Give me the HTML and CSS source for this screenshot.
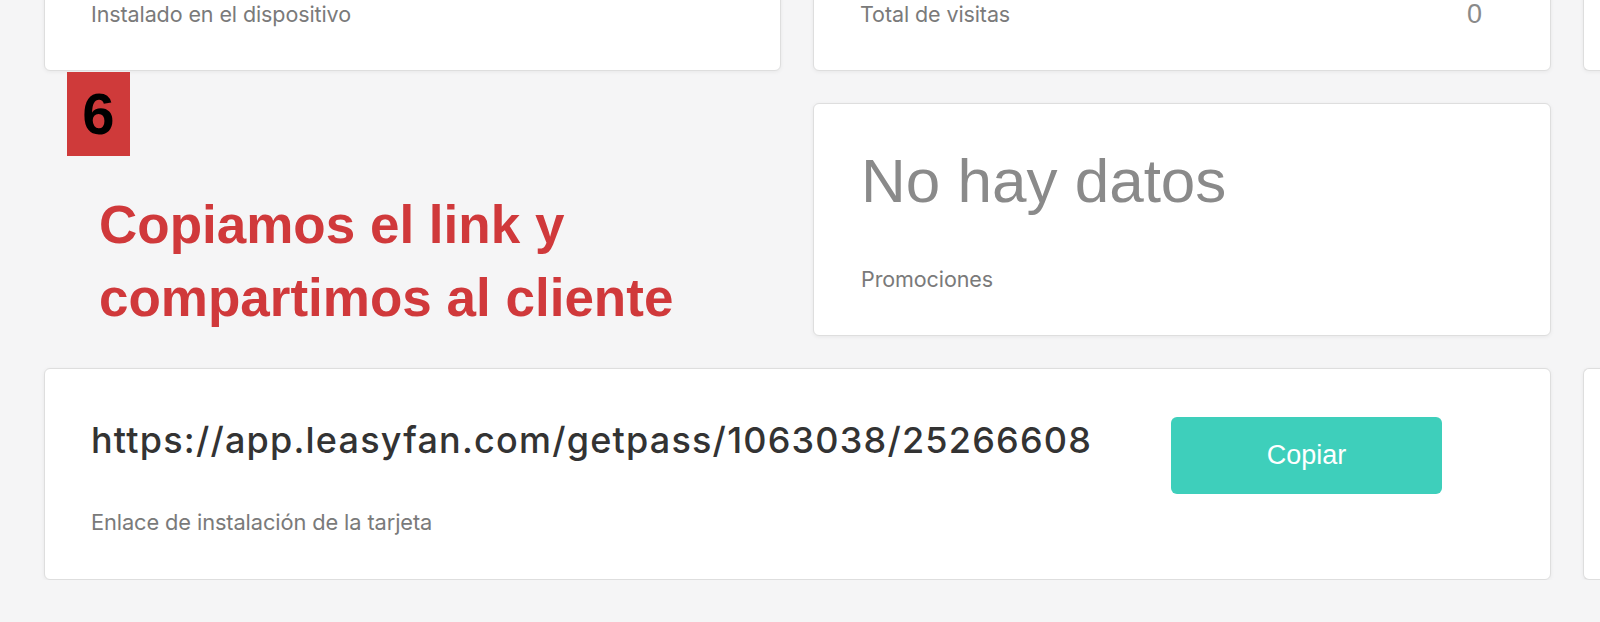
FILE: index.html
```html
<!DOCTYPE html>
<html lang="es">
<head>
<meta charset="utf-8">
<title>Tarjeta</title>
<link rel="stylesheet" href="styles.css">
</head>
<body>
<div class="page">
  <div class="card card-top">
    <div class="stat-row"><span class="label">Instalado en el dispositivo</span></div>
  </div>
  <div class="card card-top">
    <div class="stat-row"><span class="label">Total de visitas</span><span class="value">0</span></div>
  </div>
  <div class="card card-top card-edge"></div>

  <div class="note">
    <div class="badge">6</div>
    <p class="note-text">Copiamos el link y<br>compartimos al cliente</p>
  </div>
  <div class="card card-promo">
    <div class="empty">No hay datos</div>
    <span class="label">Promociones</span>
  </div>
  <div class="spacer"></div>

  <div class="card card-link">
    <div class="link-info">
      <div class="url">https://app.leasyfan.com/getpass/1063038/25266608</div>
      <span class="label label-link">Enlace de instalación de la tarjeta</span>
    </div>
    <button class="btn-copy" type="button">Copiar</button>
  </div>
  <div class="card card-edge card-edge-bottom"></div>
</div>
</body>
</html>
```

FILE: styles.css
```css
* { box-sizing: border-box; }
html, body {
  margin: 0;
  padding: 0;
  background: #f5f5f6;
  overflow: hidden;
}
body {
  font-family: Inter, "Noto Sans", sans-serif;
  color: #333;
}
.page {
  display: grid;
  grid-template-columns: 737px 738px 200px;
  column-gap: 32px;
  row-gap: 32px;
  padding-left: 44px;
  margin-top: -69px;
}
.card {
  background: #fff;
  border: 1px solid #dedede;
  border-radius: 6px;
  box-shadow: 0 1px 4px rgba(0, 0, 0, 0.06);
}
.card-top {
  height: 140px;
  display: flex;
  flex-direction: column;
  justify-content: flex-end;
  padding: 0 68px 44px 46px;
}
.stat-row {
  display: flex;
  justify-content: space-between;
  align-items: center;
  height: 24px;
}
.label {
  font-size: 21.5px;
  line-height: 24px;
  color: #7a7a7a;
  letter-spacing: -0.1px;
}
.label-link {
  font-size: 21.8px;
}
.value {
  font-family: "Liberation Sans", Arial, sans-serif;
  font-size: 27px;
  color: #8a8a8a;
}
.note {
  margin-top: -31px;
  padding-left: 23px;
}
.badge {
  width: 63px;
  height: 84px;
  background: #cf3a3a;
  color: #000;
  font-family: "Liberation Sans", Arial, sans-serif;
  font-weight: bold;
  font-size: 58px;
  line-height: 84px;
  text-align: center;
}
.note-text {
  margin: 32px 0 0 32px;
  font-family: "Liberation Sans", Arial, sans-serif;
  font-weight: bold;
  font-size: 53px;
  line-height: 73px;
  color: #d0393b;
}
.card-promo {
  height: 233px;
  padding: 37px 46px 0 47px;
  display: flex;
  flex-direction: column;
}
.empty {
  font-family: "Liberation Sans", Arial, sans-serif;
  font-size: 62px;
  line-height: 80px;
  color: #8a8a8a;
  margin-bottom: 46px;
}
.card-link {
  grid-column: 1 / 3;
  height: 212px;
  display: flex;
  align-items: flex-start;
  justify-content: space-between;
  padding: 47px 108px 0 46px;
}
.link-info {
  display: flex;
  flex-direction: column;
}
.url {
  font-size: 36px;
  line-height: 48px;
  font-weight: 500;
  color: #333;
  letter-spacing: 1.2px;
  margin-bottom: 46px;
}
.btn-copy {
  width: 271px;
  height: 77px;
  margin-top: 1px;
  border: none;
  border-radius: 6px;
  background: #3ecfbb;
  color: #fff;
  font-family: "Liberation Sans", Arial, sans-serif;
  font-size: 27px;
}
.card-edge {
  border-right: none;
  border-radius: 6px 0 0 6px;
}
.card-edge-bottom {
  height: 212px;
}
.spacer { }
```
